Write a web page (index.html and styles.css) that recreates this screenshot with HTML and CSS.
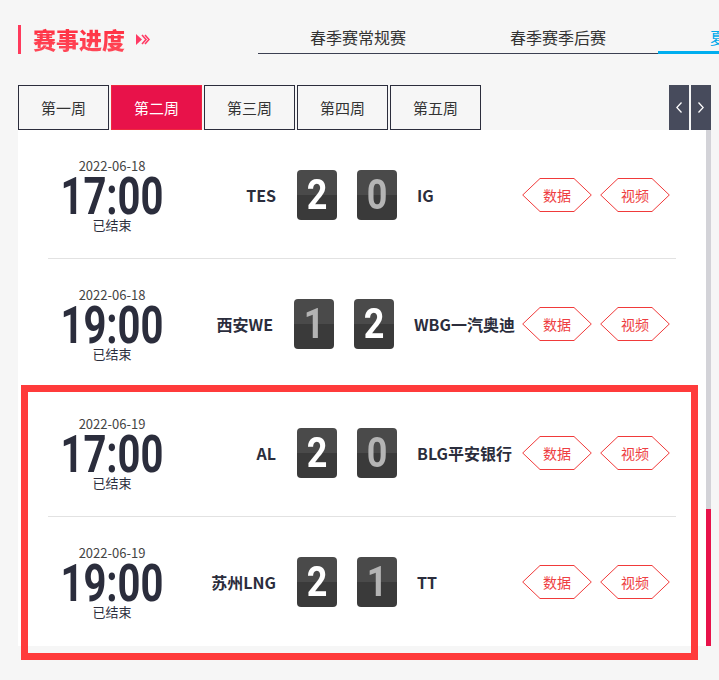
FILE: index.html
```html
<!DOCTYPE html>
<html lang="zh-CN">
<head>
<meta charset="utf-8">
<title>赛事进度</title>
<link rel="stylesheet" href="styles.css">
</head>
<body>
<div class="page">
  <header class="head">
    <div class="title">
      <span class="title-bar"></span>
      <h1 class="title-text">赛事进度</h1>
      <svg class="title-arrow" width="14" height="11" viewBox="0 0 14 11">
        <polygon points="0,0 6,5.5 0,11" fill="#ff3a64"/>
        <polyline points="6,1 10,5.5 6,10" fill="none" stroke="#ff3a64" stroke-width="1.6"/>
        <polyline points="9,1 13,5.5 9,10" fill="none" stroke="#ff3a64" stroke-width="1.6"/>
      </svg>
    </div>
    <nav class="seasons">
      <a class="season">春季赛常规赛</a>
      <a class="season">春季赛季后赛</a>
      <a class="season season-active">夏季赛常规赛</a>
    </nav>
  </header>

  <div class="weeks">
    <a class="week">第一周</a>
    <a class="week week-active">第二周</a>
    <a class="week">第三周</a>
    <a class="week">第四周</a>
    <a class="week">第五周</a>
    <div class="pager">
      <button class="pager-btn" aria-label="上一页">
        <svg width="6" height="11" viewBox="0 0 6 11"><polyline points="5.5,0.5 0.8,5.5 5.5,10.5" fill="none" stroke="#fff" stroke-width="1.3"/></svg>
      </button>
      <button class="pager-btn" aria-label="下一页">
        <svg width="6" height="11" viewBox="0 0 6 11"><polyline points="0.5,0.5 5.2,5.5 0.5,10.5" fill="none" stroke="#fff" stroke-width="1.3"/></svg>
      </button>
    </div>
  </div>

  <div class="board">
    <div class="panel">
      <div class="match">
        <div class="when">
          <div class="date">2022-06-18</div>
          <div class="time"><span class="time-num">17:00</span></div>
          <div class="state">已结束</div>
        </div>
        <div class="versus">
          <div class="team team-left">TES</div>
          <div class="score score-win"><span class="score-num">2</span></div>
          <div class="score score-lose"><span class="score-num">0</span></div>
          <div class="team team-right">IG</div>
        </div>
        <div class="links">
          <a class="hex"><svg class="hex-shape" viewBox="0 0 70 34"><polygon points="18,0.5 52,0.5 69.3,17 52,33.5 18,33.5 0.7,17"/></svg><span class="hex-text">数据</span></a>
          <a class="hex"><svg class="hex-shape" viewBox="0 0 70 34"><polygon points="18,0.5 52,0.5 69.3,17 52,33.5 18,33.5 0.7,17"/></svg><span class="hex-text">视频</span></a>
        </div>
      </div>

      <div class="match">
        <div class="when">
          <div class="date">2022-06-18</div>
          <div class="time"><span class="time-num">19:00</span></div>
          <div class="state">已结束</div>
        </div>
        <div class="versus">
          <div class="team team-left">西安WE</div>
          <div class="score score-lose"><span class="score-num">1</span></div>
          <div class="score score-win"><span class="score-num">2</span></div>
          <div class="team team-right">WBG一汽奥迪</div>
        </div>
        <div class="links">
          <a class="hex"><svg class="hex-shape" viewBox="0 0 70 34"><polygon points="18,0.5 52,0.5 69.3,17 52,33.5 18,33.5 0.7,17"/></svg><span class="hex-text">数据</span></a>
          <a class="hex"><svg class="hex-shape" viewBox="0 0 70 34"><polygon points="18,0.5 52,0.5 69.3,17 52,33.5 18,33.5 0.7,17"/></svg><span class="hex-text">视频</span></a>
        </div>
      </div>

      <div class="match">
        <div class="when">
          <div class="date">2022-06-19</div>
          <div class="time"><span class="time-num">17:00</span></div>
          <div class="state">已结束</div>
        </div>
        <div class="versus">
          <div class="team team-left">AL</div>
          <div class="score score-win"><span class="score-num">2</span></div>
          <div class="score score-lose"><span class="score-num">0</span></div>
          <div class="team team-right">BLG平安银行</div>
        </div>
        <div class="links">
          <a class="hex"><svg class="hex-shape" viewBox="0 0 70 34"><polygon points="18,0.5 52,0.5 69.3,17 52,33.5 18,33.5 0.7,17"/></svg><span class="hex-text">数据</span></a>
          <a class="hex"><svg class="hex-shape" viewBox="0 0 70 34"><polygon points="18,0.5 52,0.5 69.3,17 52,33.5 18,33.5 0.7,17"/></svg><span class="hex-text">视频</span></a>
        </div>
      </div>

      <div class="match">
        <div class="when">
          <div class="date">2022-06-19</div>
          <div class="time"><span class="time-num">19:00</span></div>
          <div class="state">已结束</div>
        </div>
        <div class="versus">
          <div class="team team-left">苏州LNG</div>
          <div class="score score-win"><span class="score-num">2</span></div>
          <div class="score score-lose"><span class="score-num">1</span></div>
          <div class="team team-right">TT</div>
        </div>
        <div class="links">
          <a class="hex"><svg class="hex-shape" viewBox="0 0 70 34"><polygon points="18,0.5 52,0.5 69.3,17 52,33.5 18,33.5 0.7,17"/></svg><span class="hex-text">数据</span></a>
          <a class="hex"><svg class="hex-shape" viewBox="0 0 70 34"><polygon points="18,0.5 52,0.5 69.3,17 52,33.5 18,33.5 0.7,17"/></svg><span class="hex-text">视频</span></a>
        </div>
      </div>
    </div>
    <div class="scrollbar"><div class="scroll-thumb"></div></div>
  </div>

  <div class="highlight"></div>
</div>
</body>
</html>
```

FILE: styles.css
```css
* { box-sizing: border-box; }

html, body {
  margin: 0;
  padding: 0;
  background: #f6f6f6;
}

body {
  font-family: "Noto Sans CJK SC", "Noto Sans", sans-serif;
  color: #2b2d3c;
  width: 719px;
  height: 680px;
  overflow: hidden;
}

.page {
  position: relative;
  width: 719px;
  height: 680px;
  overflow: hidden;
}

/* ---------- header ---------- */
.head {
  display: flex;
  align-items: flex-start;
  padding: 25px 0 0 18px;
  white-space: nowrap;
}

.title {
  width: 240px;
  flex: none;
  display: flex;
  align-items: center;
  height: 29px;
}

.title-bar {
  width: 3px;
  height: 29px;
  background: #ff3a5c;
  flex: none;
}

.title-text {
  margin: 0 0 0 12px;
  font-size: 23px;
  font-weight: 900;
  line-height: 29px;
  letter-spacing: 0;
  color: #ff3447;
  background: linear-gradient(#ff2d3f, #ff4a5a);
  -webkit-background-clip: text;
  background-clip: text;
  -webkit-text-fill-color: transparent;
}

.title-arrow {
  margin-left: 11px;
  flex: none;
}

.seasons {
  display: flex;
  flex: none;
}

.season {
  width: 200px;
  height: 29px;
  line-height: 24px;
  text-align: center;
  font-size: 16px;
  color: #333;
  border-bottom: 1px solid #3c4052;
}

.season-active {
  color: #00a9ea;
  border-bottom: 3px solid #00aeef;
}

/* ---------- weeks ---------- */
.weeks {
  display: flex;
  gap: 2px;
  margin-top: 31px;
  padding: 0 8px 0 18px;
  height: 45px;
}

.week {
  width: 91px;
  height: 45px;
  border: 1px solid #2b2d3c;
  line-height: 43px;
  text-align: center;
  font-size: 15px;
  color: #333;
  background: #f6f6f6;
}

.week-active {
  background: #e8124a;
  border-color: #f0283f;
  color: #fff;
}

.pager {
  margin-left: auto;
  display: flex;
  gap: 2px;
}

.pager-btn {
  width: 20px;
  height: 45px;
  border: 0;
  padding: 0;
  background: #474b5c;
  display: flex;
  align-items: center;
  justify-content: center;
}

/* ---------- board ---------- */
.board {
  display: flex;
  margin: 0 8px 0 18px;
}

.panel {
  width: 688px;
  background: #fff;
}

.scrollbar {
  width: 5px;
  background: #d3d3d8;
  display: flex;
  flex-direction: column;
  justify-content: flex-end;
}

.scroll-thumb {
  height: 137px;
  background: #e8124a;
}

.match {
  height: 129px;
  margin: 0 30px;
  border-bottom: 1px solid #e2e2e2;
  display: flex;
  align-items: center;
  padding-top: 2px;
}

.match:last-child {
  border-bottom-color: transparent;
}

.when {
  width: 128px;
  flex: none;
  text-align: center;
  display: flex;
  flex-direction: column;
  align-items: center;
}

.date {
  font-size: 13px;
  line-height: 16px;
  color: #444;
}

.time {
  height: 30px;
  margin-top: 8px;
}

.time-num {
  display: inline-block;
  font-family: "Roboto", "DejaVu Sans", sans-serif;
  font-weight: 700;
  font-size: 40px;
  line-height: 30px;
  color: #2b2d3c;
  transform: scaleY(1.3);
  transform-origin: 50% 48%;
}

.state {
  font-size: 13px;
  line-height: 16px;
  margin-top: 5px;
  color: #2b2d3c;
}

.versus {
  flex: 1;
  display: flex;
  align-items: center;
  justify-content: flex-end;
  margin-right: 7px;
}

.team {
  font-size: 16px;
  font-weight: 700;
  color: #2b2d3c;
  white-space: nowrap;
}

.team-left {
  text-align: right;
  margin-right: 21px;
}

.team-right {
  min-width: 98px;
  margin-left: 20px;
}

.score {
  width: 40px;
  height: 50px;
  border-radius: 4px;
  background: linear-gradient(#4a4a4a 0, #4a4a4a 50%, #3a3a3a 50%, #3a3a3a 100%);
  text-align: center;
  color: #fff;
}

.score-num {
  display: inline-block;
  font-family: "Roboto", "DejaVu Sans", sans-serif;
  font-weight: 700;
  font-size: 36px;
  line-height: 50px;
  transform: scaleY(1.2);
  transform-origin: 50% 50%;
}

.score + .score {
  margin-left: 20px;
}

.score-lose {
  color: #b4b4b4;
}

.links {
  display: flex;
  gap: 8px;
  margin-right: 6px;
  flex: none;
}

.hex {
  position: relative;
  width: 70px;
  height: 34px;
  display: flex;
  align-items: center;
  justify-content: center;
}

.hex-shape {
  position: absolute;
  left: 0;
  top: 0;
  width: 70px;
  height: 34px;
  fill: #fff;
  stroke: #f03a3a;
  stroke-width: 1;
}

.hex-text {
  position: relative;
  font-size: 14px;
  color: #ee3e42;
}

/* ---------- overlay highlight ---------- */
.highlight {
  position: absolute;
  left: 21px;
  top: 385px;
  width: 677px;
  height: 275px;
  border: 7px solid #ff3b3b;
  pointer-events: none;
}
```
